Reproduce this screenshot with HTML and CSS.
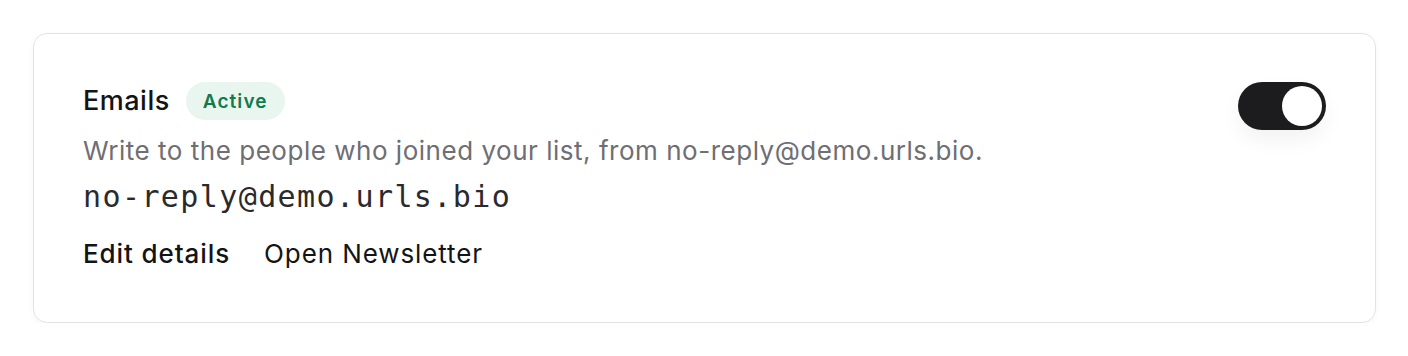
FILE: index.html
```html
<!DOCTYPE html>
<html lang="en">
<head>
<meta charset="utf-8">
<title>Emails</title>
<link rel="stylesheet" href="styles.css">
</head>
<body>
<section class="card">
  <div class="info">
    <div class="title-row">
      <h2 class="title">Emails</h2>
      <span class="badge">Active</span>
    </div>
    <p class="desc">Write to the people who joined your list, from no-reply@demo.urls.bio.</p>
    <div class="address">no-reply@demo.urls.bio</div>
    <div class="links">
      <a class="link link-strong" href="#">Edit details</a>
      <a class="link" href="#">Open Newsletter</a>
    </div>
  </div>
  <button class="toggle" type="button" aria-pressed="true" aria-label="Toggle emails">
    <span class="knob"></span>
  </button>
</section>
</body>
</html>
```

FILE: styles.css
```css
* { box-sizing: border-box; }
html, body { margin: 0; background: #ffffff; }
body {
  padding: 33px 32px 0 33px;
  font-family: Inter, "Noto Sans", sans-serif;
  color: #141416;
}
.card {
  display: flex;
  justify-content: space-between;
  align-items: flex-start;
  height: 290px;
  border: 1px solid #e3e3e6;
  border-radius: 14px;
  padding: 48px 49px 0 49px;
  box-shadow: 0 2px 6px rgba(0,0,0,0.04);
}
.info { display: flex; flex-direction: column; }
.title-row { display: flex; align-items: center; gap: 16px; height: 38px; }
.title { margin: 0; font-size: 27px; font-weight: 500; letter-spacing: 0.5px; line-height: 38px; }
.badge {
  display: inline-flex; align-items: center;
  height: 38px; padding: 0 17px;
  border-radius: 19px;
  background: #e8f6ef;
  color: #137a4c;
  font-size: 19px; font-weight: 600; letter-spacing: 1.1px;
}
.desc {
  margin: 13px 0 0;
  font-size: 26px;
  color: #6e6e73;
  line-height: 36px;
  letter-spacing: 0.52px;
}
.address {
  margin-top: 10px;
  font-family: "DejaVu Sans Mono", "Liberation Mono", monospace;
  font-size: 30px;
  letter-spacing: 1.4px;
  color: #2a2a2c;
  line-height: 36px;
}
.links { display: flex; gap: 34px; margin-top: 22px; }
.link {
  font-size: 26px;
  color: #141416;
  text-decoration: none;
  line-height: 34px;
  letter-spacing: 0.9px;
}
.link-strong { font-weight: 500; }
.toggle {
  flex: none;
  width: 88px; height: 48px;
  margin-top: 0;
  border: none;
  border-radius: 24px;
  background: #1c1c1e;
  padding: 4px;
  display: flex; justify-content: flex-end; align-items: center;
  box-shadow: 0 10px 20px rgba(0,0,0,0.05);
  cursor: pointer;
}
.knob {
  width: 40px; height: 40px;
  border-radius: 50%;
  background: #ffffff;
}
```
